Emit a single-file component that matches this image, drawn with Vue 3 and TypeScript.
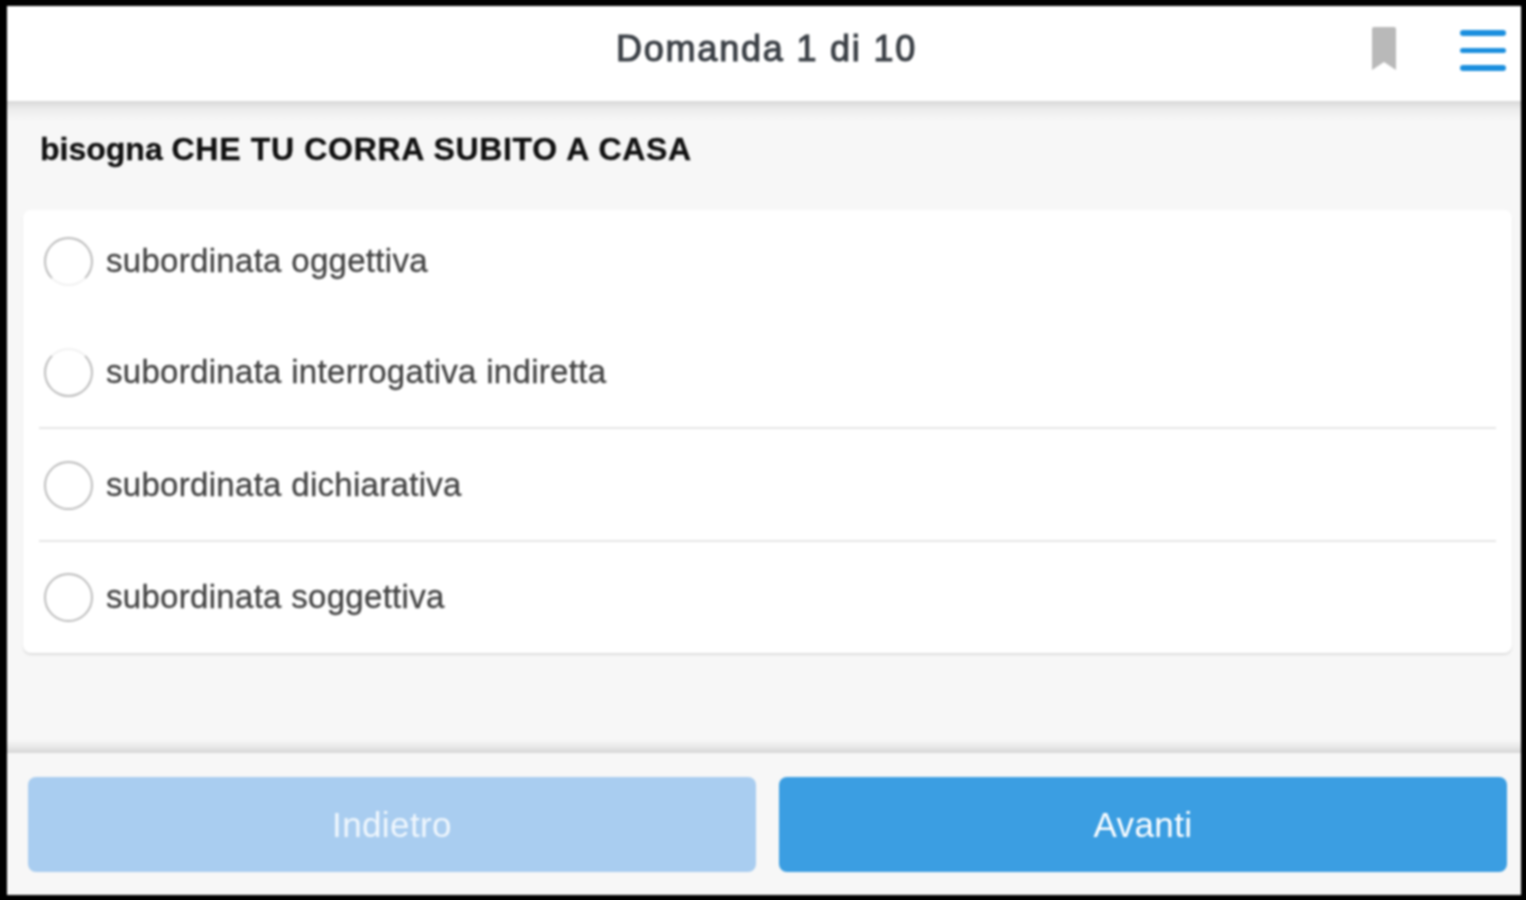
<template>
  <div class="frame">
    <div class="screen">
      <header class="topbar">
        <h1 class="title">Domanda 1 di 10</h1>
        <svg class="bookmark" viewBox="0 0 24 44" width="24" height="44">
          <path d="M0 2a2 2 0 0 1 2-2h20a2 2 0 0 1 2 2v41l-12-8-12 8z" fill="#b9b9b9" />
        </svg>
        <div class="menu">
          <span></span>
          <span></span>
          <span></span>
        </div>
      </header>

      <main class="content">
        <p class="question">bisogna <b>CHE TU CORRA SUBITO A CASA</b></p>
        <ul class="card">
          <li v-for="opt in options" :key="opt.label" class="row" :class="{ lined: opt.lined }">
            <span class="radio" :class="opt.ring"></span>
            <span class="label">{{ opt.label }}</span>
          </li>
        </ul>
      </main>

      <footer class="bottombar">
        <button class="btn back" disabled>Indietro</button>
        <button class="btn next">Avanti</button>
      </footer>
    </div>
  </div>
</template>

<script setup lang="ts">
interface Option {
  label: string;
  ring: string;
  lined: boolean;
}

const options: Option[] = [
  { label: "subordinata oggettiva", ring: "fade-bottom", lined: false },
  { label: "subordinata interrogativa indiretta", ring: "fade-top", lined: true },
  { label: "subordinata dichiarativa", ring: "", lined: true },
  { label: "subordinata soggettiva", ring: "", lined: false },
];
</script>

<style>
html,
body {
  margin: 0;
  background: #000;
}
</style>

<style scoped>
.frame {
  box-sizing: border-box;
  width: 1526px;
  height: 900px;
  padding: 6px 5px 5px 7px;
  background: #000;
  font-family: "Liberation Sans", Arial, sans-serif;
  overflow: hidden;
}

/* the reference is an upscaled small capture, so everything is a bit soft */
.screen {
  display: flex;
  flex-direction: column;
  height: 100%;
  background: #f7f7f7;
  filter: blur(1px);
}

.topbar {
  display: flex;
  align-items: center;
  position: relative;
  flex: none;
  height: 95px;
  background: #fff;
}

.title {
  flex: 1;
  margin: 0 0 9px;
  padding-left: 5px;
  font-size: 36px;
  font-weight: 400;
  letter-spacing: 1.8px;
  -webkit-text-stroke: 1.1px #3c4147;
  color: #3c4147;
  text-align: center;
}

.bookmark {
  position: absolute;
  left: 1365px;
  top: 21px;
}

.menu {
  position: absolute;
  left: 1453px;
  top: 24px;
  display: flex;
  flex-direction: column;
  gap: 12px;
  width: 46px;
}

.menu span {
  height: 5.5px;
  border-radius: 3px;
  background: #1b8fde;
}

.content {
  flex: 1;
  padding: 0 9px 0 16px;
  background:
    linear-gradient(#d8d8d8, #ececec 8px, #f7f7f7 20px) top / 100% 20px no-repeat,
    linear-gradient(#f7f7f7, #e8e8e8 7px, #d6d6d6) bottom / 100% 13px no-repeat,
    #f7f7f7;
}

.question {
  margin: 0;
  padding: 29px 0 0 17px;
  height: 80px;
  box-sizing: border-box;
  font-size: 32px;
  line-height: 38px;
  font-weight: 700;
  -webkit-text-stroke: 0.3px #111;
  color: #111;
}

.question b {
  letter-spacing: 0.68px;
}

.card {
  list-style: none;
  margin: 29px 0 0;
  padding: 0 16px;
  height: 443px;
  box-sizing: border-box;
  background: #fff;
  border-radius: 8px;
  box-shadow: 0 2px 2px #dedede;
}

.row {
  display: flex;
  align-items: center;
  gap: 13px;
  height: 112.5px;
  box-sizing: border-box;
  padding: 0 0 0 5px;
}

.row:first-child {
  height: 106.5px;
  padding-bottom: 4px;
}

.row.lined {
  padding-top: 2px;
  border-bottom: 2px solid #e6e6e6;
}

.radio {
  box-sizing: border-box;
  flex: none;
  width: 49px;
  height: 49px;
  border: 2px solid #bdbdbd;
  border-radius: 50%;
  background: #fff;
}

.radio.fade-bottom {
  border-bottom-color: #f2f2f2;
}

.radio.fade-top {
  border-top-color: #f2f2f2;
}

.label {
  margin-top: -1px;
  font-size: 33px;
  letter-spacing: 0.3px;
  -webkit-text-stroke: 0.3px #444;
  color: #444;
}

.bottombar {
  display: flex;
  flex: none;
  gap: 23px;
  height: 142px;
  box-sizing: border-box;
  padding: 24px 14px 23px 21px;
  background: #f7f7f7;
}

.btn {
  flex: 1;
  border: none;
  border-radius: 8px;
  font-family: inherit;
  font-size: 35px;
  letter-spacing: 0.4px;
  color: #fff;
}

.back {
  background: #a9cdf0;
  color: #f0f7fd;
}

.next {
  background: #3b9ee2;
}
</style>
